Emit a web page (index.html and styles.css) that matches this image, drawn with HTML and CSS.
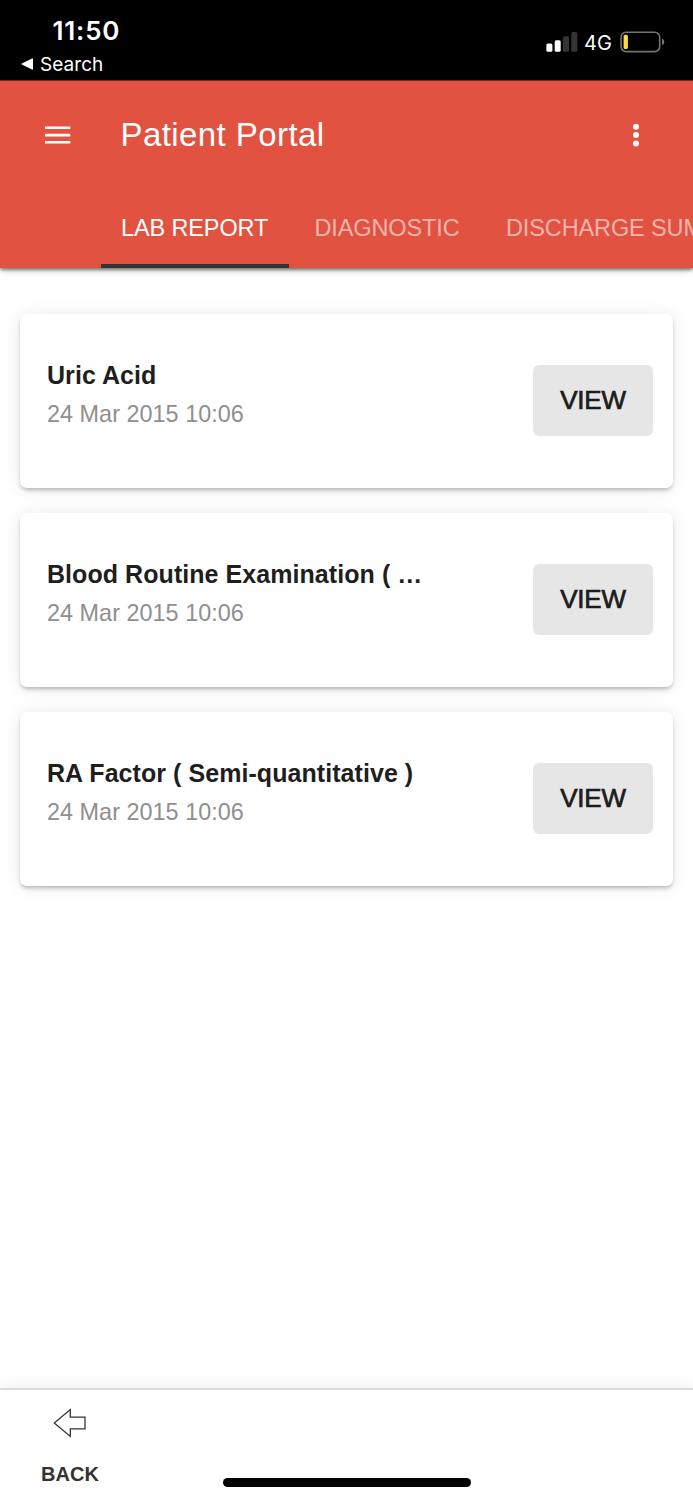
FILE: index.html
```html
<!DOCTYPE html>
<html lang="en">
<head>
<meta charset="utf-8">
<title>Patient Portal</title>
<link rel="stylesheet" href="styles.css">
</head>
<body>
<div class="screen">
  <div class="status">
    <div class="status-left">
      <div class="time">11:50</div>
      <div class="return">
        <svg width="12" height="12" viewBox="0 0 12 12"><path d="M11 .4Q12 0 12 1V11Q12 12 11 11.6L.8 6.6Q0 6 .8 5.4Z" fill="#fff"/></svg>
        <span>Search</span>
      </div>
    </div>
    <div class="status-right">
      <svg class="signal" width="32" height="20" viewBox="0 0 32 20">
        <rect x="0.4" y="11.6" width="6" height="8.2" rx="1.5" fill="#fff"/>
        <rect x="8.7" y="8.2" width="6" height="11.6" rx="1.5" fill="#fff"/>
        <rect x="17" y="4.2" width="6" height="15.6" rx="1.5" fill="#343434"/>
        <rect x="25.3" y="0" width="6" height="19.8" rx="1.5" fill="#343434"/>
      </svg>
      <span class="network">4G</span>
      <svg width="46" height="22" viewBox="0 0 46 22">
        <rect x="1.1" y="1.2" width="38.6" height="19.4" rx="5" fill="none" stroke="#737373" stroke-width="1.6"/>
        <rect x="3.6" y="3.7" width="4.3" height="14.4" rx="1.6" fill="#fddc3f"/>
        <path d="M42 7.5Q44.3 8.4 44.3 10.9T42 14.3Z" fill="#737373"/>
      </svg>
    </div>
  </div>

  <header class="header">
    <div class="toolbar">
      <svg class="menu" width="26" height="18" viewBox="0 0 26 18"><path d="M0 1.8H25.3M0 9.1H25.3M0 16.3H25.3" stroke="#fff" stroke-width="2.6"/></svg>
      <h1 class="title">Patient Portal</h1>
      <svg class="more" width="8" height="24" viewBox="0 0 8 24"><g fill="#fff"><circle cx="4" cy="3.7" r="3"/><circle cx="4" cy="12" r="3"/><circle cx="4" cy="20.4" r="3"/></g></svg>
    </div>
    <nav class="tabs">
      <a class="tab tab-active">LAB REPORT</a>
      <a class="tab tab-second">DIAGNOSTIC</a>
      <a class="tab">DISCHARGE SUMMARY</a>
    </nav>
  </header>

  <main class="list">
    <section class="card">
      <div class="info"><h2 class="name">Uric Acid</h2><p class="date">24 Mar 2015 10:06</p></div>
      <button class="view">VIEW</button>
    </section>
    <section class="card">
      <div class="info"><h2 class="name">Blood Routine Examination ( …</h2><p class="date">24 Mar 2015 10:06</p></div>
      <button class="view">VIEW</button>
    </section>
    <section class="card">
      <div class="info"><h2 class="name">RA Factor ( Semi-quantitative )</h2><p class="date">24 Mar 2015 10:06</p></div>
      <button class="view">VIEW</button>
    </section>
  </main>

  <footer class="footer">
    <div class="back">
      <svg width="34" height="30" viewBox="0 0 34 30"><path d="M1.3 15L17.3 1.6V9.2H32V20.8H17.3V28.4Z" fill="none" stroke="#333" stroke-width="1.3"/></svg>
      <span class="back-label">BACK</span>
    </div>
    <div class="home"></div>
  </footer>
</div>
</body>
</html>
```
FILE: styles.css
```css
* { box-sizing: border-box; margin: 0; padding: 0; }
body { background: #fff; font-family: "Liberation Sans", Arial, sans-serif; }
svg { display: block; flex: none; }
.screen { width: 693px; height: 1500px; display: flex; flex-direction: column; overflow: hidden; }

.status { height: 81px; flex: none; background: #000; color: #fff; display: flex; justify-content: space-between; border-bottom: 1px solid #71291f; font-family: Inter, sans-serif; }
.status-left { padding: 15px 0 0 21px; }
.time { height: 32px; line-height: 32px; padding-left: 31.5px; font-size: 26px; font-weight: 600; letter-spacing: .8px; }
.return { display: flex; align-items: center; gap: 7px; height: 34px; font-size: 19px; letter-spacing: .05px; }
.status-right { display: flex; align-items: center; height: 22px; margin: 31px 27px 0 0; }
.network { width: 42px; padding: 1px 0 0 6px; font-size: 20px; line-height: 22px; }

.header { height: 187px; flex: none; background: #e15241; color: #fff; box-shadow: 0 4px 8px -2px rgba(0,0,0,.22), 0 2px 3px rgba(0,0,0,.45); }
.toolbar { height: 107px; display: flex; align-items: center; padding: 1px 54px 0 44.5px; }
.title { flex: 1; margin-left: 50px; font-size: 33px; line-height: 40px; font-weight: 400; letter-spacing: .42px; }
.more { margin-right: -.5px; }
.tabs { height: 80px; display: flex; padding-left: 101px; overflow: hidden; }
.tab { flex: none; padding: 26px 20px 0; font-size: 23.5px; line-height: 28px; letter-spacing: -.12px; white-space: nowrap; color: rgba(255,255,255,.58); }
.tab-active { width: 188px; color: #fff; border-bottom: 4px solid #333; }
.tab-second { width: 197px; padding-left: 25.5px; }

.list { flex: 1; display: flex; flex-direction: column; gap: 25px; padding: 45.5px 20px 0; }
.card { height: 174px; flex: none; display: flex; align-items: center; justify-content: space-between; padding: 0 20px 0 27px; background: #fff; border-radius: 7px; box-shadow: 0 3px 4px -1px rgba(0,0,0,.26), 0 1px 18px rgba(0,0,0,.09); }
.info { padding-bottom: 12px; }
.name { font-size: 25px; line-height: 36px; font-weight: 700; letter-spacing: .06px; color: #1e1e1e; white-space: nowrap; }
.date { margin-top: 3px; font-size: 23.4px; line-height: 36px; letter-spacing: .03px; color: #8f8f8f; }
.view { width: 120px; height: 71px; border: 0; border-radius: 6px; background: #e6e6e6; color: #1c1c1c; font: 400 26px "Liberation Sans", Arial, sans-serif; letter-spacing: -.2px; -webkit-text-stroke: .7px #1c1c1c; }

.footer { height: 112px; flex: none; display: flex; align-items: flex-start; border-top: 2px solid #dcdcdc; background: #fff; box-shadow: 0 0 18px rgba(0,0,0,.08); }
.back { width: 140px; padding-top: 18px; display: flex; flex-direction: column; align-items: center; gap: 24px; }
.back-label { font-size: 20px; line-height: 24px; font-weight: 700; color: #333; }
.home { width: 248px; height: 9px; margin: 88px 0 0 82.5px; border-radius: 5px; background: #000; }
```
